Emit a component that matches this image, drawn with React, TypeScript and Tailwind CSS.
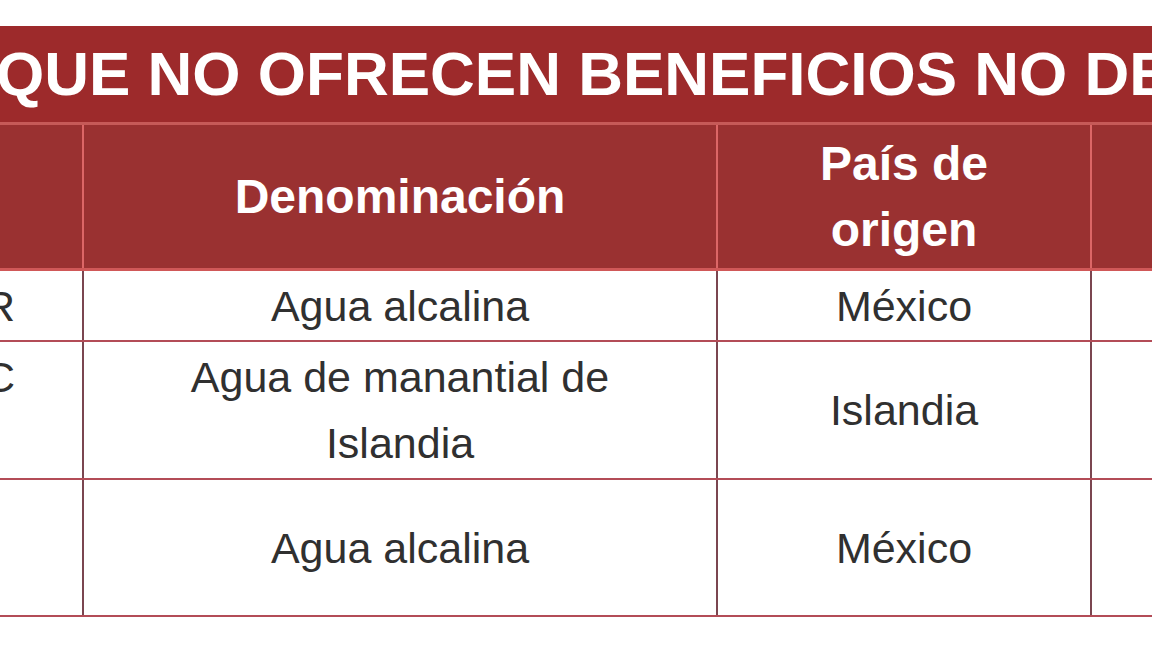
const font = { fontFamily: '"Liberation Sans", Arial, sans-serif' }

type Row = { code: string[]; name: string[]; country: string; h: string }

const rows: Row[] = [
  { code: ['R'], name: ['Agua alcalina'], country: 'México', h: 'h-[69px]' },
  { code: ['C', '\u00a0'], name: ['Agua de manantial de', 'Islandia'], country: 'Islandia', h: 'h-[136px]' },
  { code: [''], name: ['Agua alcalina'], country: 'México', h: 'h-[135px]' },
]

export default function App() {
  return (
    <div className="w-[1152px] h-[648px] overflow-hidden bg-white" style={font}>
      <div className="h-[26px]" />

      {/* title bar, cropped on both sides like the source */}
      <div className="flex h-[96px] items-center overflow-hidden bg-[#9d2a2b] text-white">
        <span className="-ml-[4px] whitespace-nowrap text-[62px] font-bold leading-none">
          QUE NO OFRECEN BENEFICIOS NO DECLARADOS
        </span>
      </div>
      <div className="h-[3px] bg-[#c65a58]" />

      {/* header row */}
      <div className="flex h-[143px] bg-[#9a3131] text-[48px] font-bold leading-[66px] text-white">
        <div className="w-[84px] shrink-0 border-r-2 border-[#dc6666]" />
        <div className="flex w-[634px] shrink-0 items-center justify-center border-r-2 border-[#dc6666]">
          Denominación
        </div>
        <div className="flex w-[374px] shrink-0 flex-col items-center justify-center border-r-2 border-[#dc6666] text-center">
          <span>País de</span>
          <span>origen</span>
        </div>
        <div className="flex-1" />
      </div>
      <div className="h-[3px] bg-[#d05858]" />

      {/* body */}
      {rows.map((r, i) => (
        <div key={i} className="border-b-2 border-[#b34c57]">
          <div className={`flex ${r.h} text-[43px] leading-[66px] text-[#303030]`}>
            <div className="flex w-[84px] shrink-0 flex-col items-end justify-center overflow-hidden border-r-2 border-[#7b4650] pr-[67px]">
              {r.code.map((c, j) => (
                <span key={j}>{c}</span>
              ))}
            </div>
            <div className="flex w-[634px] shrink-0 flex-col items-center justify-center border-r-2 border-[#7b4650] text-center">
              {r.name.map((n, j) => (
                <span key={j}>{n}</span>
              ))}
            </div>
            <div className="flex w-[374px] shrink-0 items-center justify-center border-r-2 border-[#7b4650]">
              {r.country}
            </div>
            <div className="flex-1" />
          </div>
        </div>
      ))}
    </div>
  )
}
